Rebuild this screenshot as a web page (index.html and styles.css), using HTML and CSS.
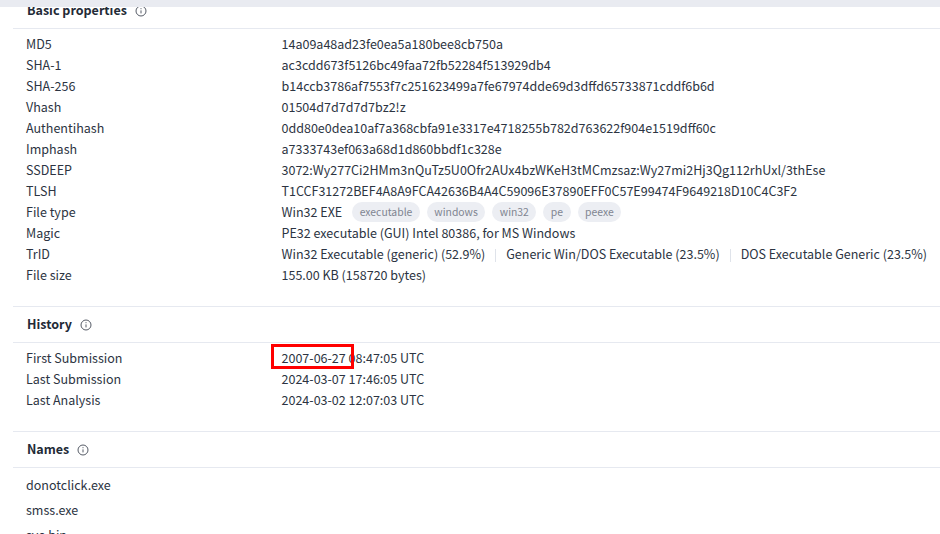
FILE: index.html
```html
<!DOCTYPE html>
<html lang="en">
<head>
<meta charset="utf-8">
<title>Details</title>
<link rel="stylesheet" href="styles.css">
</head>
<body>
<div class="topbar"></div>
<main class="page">
  <section class="section">
    <h2 class="head">Basic properties <svg class="info" viewBox="0 0 12 12"><circle cx="6" cy="6" r="5"/><path d="M6 5.4v3M6 3.2v1"/></svg></h2>
    <dl class="props">
      <dt>MD5</dt><dd>14a09a48ad23fe0ea5a180bee8cb750a</dd>
      <dt>SHA-1</dt><dd>ac3cdd673f5126bc49faa72fb52284f513929db4</dd>
      <dt>SHA-256</dt><dd>b14ccb3786af7553f7c251623499a7fe67974dde69d3dffd65733871cddf6b6d</dd>
      <dt>Vhash</dt><dd>01504d7d7d7d7bz2!z</dd>
      <dt>Authentihash</dt><dd>0dd80e0dea10af7a368cbfa91e3317e4718255b782d763622f904e1519dff60c</dd>
      <dt>Imphash</dt><dd>a7333743ef063a68d1d860bbdf1c328e</dd>
      <dt>SSDEEP</dt><dd>3072:Wy277Ci2HMm3nQuTz5U0Ofr2AUx4bzWKeH3tMCmzsaz:Wy27mi2Hj3Qg112rhUxl/3thEse</dd>
      <dt>TLSH</dt><dd>T1CCF31272BEF4A8A9FCA42636B4A4C59096E37890EFF0C57E99474F9649218D10C4C3F2</dd>
      <dt>File type</dt><dd class="tags">Win32 EXE <span class="tag first">executable</span><span class="tag">windows</span><span class="tag">win32</span><span class="tag">pe</span><span class="tag">peexe</span></dd>
      <dt>Magic</dt><dd>PE32 executable (GUI) Intel 80386, for MS Windows</dd>
      <dt>TrID</dt><dd class="trid"><span>Win32 Executable (generic) (52.9%)</span><span>Generic Win/DOS Executable (23.5%)</span><span>DOS Executable Generic (23.5%)</span></dd>
      <dt>File size</dt><dd>155.00 KB (158720 bytes)</dd>
    </dl>
  </section>
  <section class="section">
    <h2 class="head">History <svg class="info" viewBox="0 0 12 12"><circle cx="6" cy="6" r="5"/><path d="M6 5.4v3M6 3.2v1"/></svg></h2>
    <dl class="props">
      <dt>First Submission</dt><dd class="marked">2007-06-27 08:47:05 UTC<span class="redbox"></span></dd>
      <dt>Last Submission</dt><dd>2024-03-07 17:46:05 UTC</dd>
      <dt>Last Analysis</dt><dd>2024-03-02 12:07:03 UTC</dd>
    </dl>
  </section>
  <section class="section last">
    <h2 class="head">Names <svg class="info" viewBox="0 0 12 12"><circle cx="6" cy="6" r="5"/><path d="M6 5.4v3M6 3.2v1"/></svg></h2>
    <ul class="names">
      <li>donotclick.exe</li>
      <li>smss.exe</li>
      <li>svc.bin</li>
    </ul>
  </section>
</main>
</body>
</html>
```
FILE: styles.css
```css
* { box-sizing: border-box; }
html, body { margin: 0; height: 534px; overflow: hidden; background: #fff; }
body {
  position: relative;
  font-family: "Noto Sans CJK SC", "Noto Sans", sans-serif;
  font-size: 12.53px;
  color: #2c3442;
}
.topbar {
  position: absolute;
  top: 0; left: 0; right: 0;
  height: 7px;
  background: #e9ebf1;
  z-index: 2;
}
.page { margin-top: -7px; padding-left: 13px; }
.section { border-bottom: 1px solid #e6e9f0; padding-bottom: 21px; }
.section.last { border-bottom: 0; }
.head {
  margin: 0;
  height: 36px;
  padding-left: 14px;
  padding-bottom: 2px;
  display: flex;
  align-items: center;
  gap: 8px;
  font-size: 12.53px;
  font-weight: 700;
  line-height: 20px;
  color: #232a36;
  border-bottom: 1px solid #e6e9f0;
}
.info { width: 12px; height: 12px; margin-top: 2px; fill: none; stroke: #555b66; stroke-width: 1; }
.props {
  margin: 4px 0 0;
  padding-left: 13px;
  display: grid;
  grid-template-columns: 255.5px 1fr;
  grid-auto-rows: 21px;
  line-height: 21px;
}
.props dt, .props dd { margin: 0; white-space: nowrap; }
.tags { display: flex; align-items: center; }
.tag {
  height: 20px;
  line-height: 20px;
  padding: 0 7.5px;
  margin-left: 7px;
  border-radius: 10px;
  background: #eceef3;
  color: #7f8591;
  font-size: 10.4px;
}
.tag.first { margin-left: 10px; }
.trid { display: flex; align-items: center; }
.trid span + span { margin-left: 10px; padding-left: 11px; position: relative; }
.trid span + span::before {
  content: "";
  position: absolute;
  left: 0; top: 6px;
  height: 13px;
  width: 1px;
  background: #dfe3ea;
}
.marked { position: relative; }
.redbox {
  position: absolute;
  left: -11px; top: -3px;
  width: 83px; height: 25px;
  border: 3px solid #f00;
}
.names { list-style: none; margin: 4px 0 0; padding: 0 0 0 13px; line-height: 25px; }
```
